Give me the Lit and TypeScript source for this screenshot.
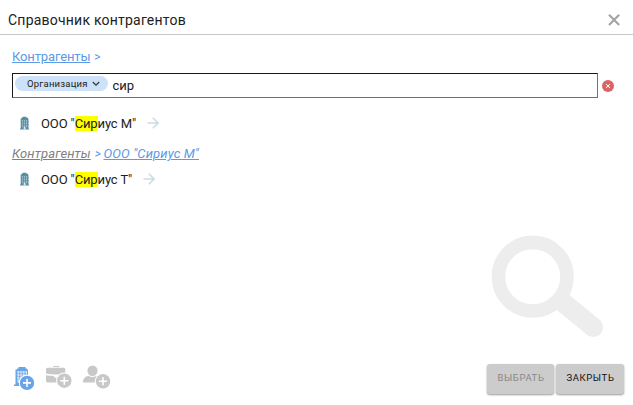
import { LitElement, html, css, svg } from "lit";
import { customElement, property } from "lit/decorators.js";

const plusBadge = (cx: number, cy: number) => svg`
  <circle cx=${cx} cy=${cy} r="8.2" fill="#fff"></circle>
  <circle cx=${cx} cy=${cy} r="7.2" fill="currentColor"></circle>
  <path d="M${cx - 4} ${cy}h8M${cx} ${cy - 4}v8" stroke="#fff" stroke-width="1.6"></path>`;

@customElement("result-row")
export class ResultRow extends LitElement {
  @property() match = "";
  @property() rest = "";

  static styles = css`
    :host { display: flex; align-items: center; height: 20px; padding-left: 20px; }
    .building { width: 10px; height: 14px; flex: none; }
    .name { margin-left: 11px; white-space: pre; font-size: 13px; line-height: 15px; letter-spacing: -0.12px; color: #212121; }
    .hit { background: #ff0; display: inline-block; }
    .arrow { width: 12px; height: 12px; margin-left: 11px; flex: none; }
  `;

  render() {
    return html`
      <svg class="building" viewBox="0 0 10 14">
        <path d="M2.5 .8h4v1H8v1h.5v9.7H9v1H0v-1h.7V2.8h.6v-1h1.2z" fill="#598ea3"></path>
        <path d="M2.6 4v7M4.6 4v7M6.6 4v7" stroke="#b4d0da" stroke-width=".8"></path>
        <path d="M1 6h7.500M1 8.500h7.500" stroke="#598ea3" stroke-width=".6"></path>
        <path d="M3.700 11h1.800v2.500h-1.800z" fill="#dcebf0"></path>
      </svg>
      <span class="name">ООО "<span class="hit">${this.match}</span>${this.rest}"</span>
      <svg class="arrow" viewBox="0 0 12 12">
        <path d="M0.5 6H11M5.8 .8L11 6L5.8 11.2" fill="none" stroke="#cbdce2" stroke-width="1.6"></path>
      </svg>`;
  }
}

@customElement("app-root")
export class AppRoot extends LitElement {
  static styles = css`
    :host {
      display: flex; flex-direction: column; position: relative; box-sizing: border-box;
      width: 633px; height: 405px; overflow: hidden; background: #fff;
      font-family: Roboto, "Liberation Sans", sans-serif; color: #212121;
    }
    .header {
      display: flex; align-items: center; justify-content: space-between; box-sizing: border-box;
      height: 35px; padding: 5px 13px 0 8px; border-bottom: 1px solid #c8c8c8; flex: none;
    }
    .title { font-size: 14px; letter-spacing: 0.22px; line-height: 18px; }
    .close { width: 12px; height: 12px; }
    .crumbs { display: flex; align-items: center; height: 20px; padding-left: 12px; font-size: 13px; line-height: 16px; color: #5a9ae6; white-space: pre; }
    .crumbs.top { margin-top: 12px; letter-spacing: -0.13px; }
    .crumbs.found { font-style: italic; margin-top: 11px; letter-spacing: 0.12px; }
    .link { text-decoration: underline; }
    .muted { color: #808080; }
    .sep { margin-left: 4px; font-size: 12px; }
    .found .sep { margin-right: 2.5px; }
    .search { display: flex; align-items: center; margin-top: 6px; padding: 0 19px 0 12px; }
    .field {
      display: flex; align-items: center; flex: 1; box-sizing: border-box; height: 25px; padding-left: 2px;
      border: 1px solid; border-color: #1a1a1a #707070 #707070 #1a1a1a;
    }
    .chip {
      display: flex; align-items: center; box-sizing: border-box; width: 93px; height: 15px; margin-top: -4px;
      padding-left: 12px; border-radius: 8px; background: #cde2f9; font-size: 9.5px; line-height: 12px; letter-spacing: 0.22px;
    }
    .chevron { width: 8px; height: 6px; margin-left: 4px; }
    .query { margin-left: 4.5px; font-size: 13px; line-height: 16px; }
    .clear { width: 12px; height: 12px; margin-left: 4px; }
    .first { margin-top: 15px; }
    .second { margin-top: 5px; }
    .lens { position: absolute; left: 490px; top: 234px; width: 115px; height: 105px; }
    .footer { display: flex; align-items: center; margin-top: auto; padding: 0 9px 11px 12px; }
    .tool { width: 30px; height: 28px; margin-bottom: 2px; color: #c8c8c8; }
    .tool.active { color: #6aa4e8; width: 24px; }
    .tool.case { margin-left: 9px; }
    .tool.person { margin-left: 8px; }
    .actions { display: flex; gap: 2px; margin-left: auto; }
    .btn {
      width: 67px; height: 30px; padding: 0 0 2px 1px; border: 0; border-radius: 3px; background: #ccc; color: #111;
      font: 400 9.5px/12px Roboto, sans-serif; letter-spacing: 0.6px;
      box-shadow: 0 1px 2px rgba(0, 0, 0, 0.4);
    }
    .btn.wide { width: 68px; }
    .btn:disabled { color: #888; }
  `;

  render() {
    return html`
      <div class="header">
        <span class="title">Справочник контрагентов</span>
        <svg class="close" viewBox="0 0 12 12"><path d="M1 .8l10.2 10.2M11.200 .8l-10.200 10.200" stroke="#a5a5a5" stroke-width="2.2"></path></svg>
      </div>
      <div class="crumbs top"><span class="link">Контрагенты</span><span class="sep">&gt;</span></div>
      <div class="search">
        <div class="field">
          <div class="chip">Организация
            <svg class="chevron" viewBox="0 0 8 6"><path d="M.8 1L4 4.2L7.2 1" fill="none" stroke="#333" stroke-width="1.2"></path></svg>
          </div>
          <span class="query">сир</span>
        </div>
        <svg class="clear" viewBox="0 0 12 12">
          <circle cx="6" cy="6" r="6" fill="#d96464"></circle>
          <path d="M4 4l4 4M8 4l-4 4" stroke="#fff" stroke-width="1"></path>
        </svg>
      </div>
      <result-row class="first" match="Сир" rest="иус М"></result-row>
      <div class="crumbs found"><span class="link muted">Контрагенты</span><span class="sep">&gt;</span><span class="link">ООО "Сириус М"</span></div>
      <result-row class="second" match="Сир" rest="иус Т"></result-row>
      <svg class="lens" viewBox="0 0 115 105" fill="none" stroke="#ededed">
        <circle cx="42.7" cy="42.7" r="34.3" stroke-width="13.6"></circle>
        <path d="M72 67.5L103.3 93.3" stroke-width="19.6"></path>
        <circle cx="103.3" cy="93.3" r="9.8" fill="#ededed" stroke="none"></circle>
      </svg>
      <div class="footer">
        <svg class="tool active" viewBox="0 0 24 28">
          <path d="M5 5.5V4.500h1.500V3h7v1.500H15v1h1V22H2v-1.500h1.500v-15z" fill="currentColor"></path>
          <path d="M5 8h10M5 11h10M5 14h10M5 17h10M6.2 7v12M9 7v12M11.8 7v12M14.4 7v12" stroke="#fff" stroke-width=".7" fill="none"></path>
          ${plusBadge(15, 18.9)}
        </svg>
        <svg class="tool case" viewBox="0 0 30 28">
          <path d="M8.200 3V2h6v1z" fill="currentColor"></path>
          <path d="M2.500 3.700H19q1.300 0 1.300 1.500V9.500q-9.600 2-19.300 0V5.200Q1 3.700 2.500 3.700z" fill="currentColor"></path>
          <path d="M1 11.200q4 .6 8 .8v1.500h4V12q4-.2 7.300-.8V18.500H2.500Q1 18.500 1 17z" fill="currentColor"></path>
          ${plusBadge(19.3, 16.7)}
        </svg>
        <svg class="tool person" viewBox="0 0 30 28">
          <ellipse cx="9.5" cy="6.800" rx="5.100" ry="5.200" fill="currentColor"></ellipse>
          <path d="M0 18.500q0-6 5.500-6.500q3.800 2 7.600 0q5.200.8 5.200 6.500z" fill="currentColor"></path>
          ${plusBadge(20, 17.3)}
        </svg>
        <div class="actions">
          <button class="btn" disabled>ВЫБРАТЬ</button>
          <button class="btn wide">ЗАКРЫТЬ</button>
        </div>
      </div>`;
  }
}
